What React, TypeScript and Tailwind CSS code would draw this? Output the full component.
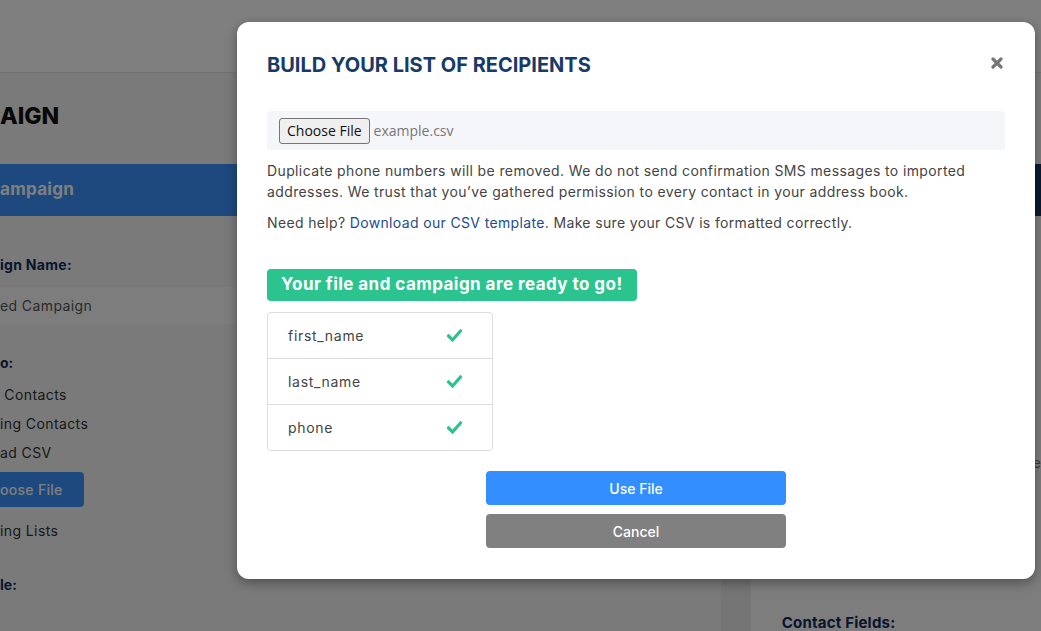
import React from "react";

// Check mark used in the field list
function Check() {
  return (
    <svg width="15" height="13" viewBox="0 0 15 13" fill="none">
      <path d="M1.5 7 L5.5 11 L13.5 2" stroke="#2bc48f" strokeWidth="3.2" strokeLinecap="square" />
    </svg>
  );
}

const fields = ["first_name", "last_name", "phone"];

export default function App() {
  return (
    <div
      className="relative h-[631px] w-[1041px] overflow-hidden bg-[#f1f1f1] text-[#333]"
      style={{ fontFamily: "Inter, 'Noto Sans', sans-serif" }}
    >
      {/* page header */}
      <div className="h-[73px] border-b border-[#e4e4e4] bg-white" />

      <div className="flex">
        {/* left column: campaign form */}
        <div className="w-[723px] bg-[#f5f5f5]">
          <div className="pt-[27px] text-[23px] font-extrabold leading-[33px] text-[#111]">AIGN</div>
          <div className="mt-[31px] flex h-[52px] items-center bg-[#3a93ff] text-[17px] font-bold tracking-[0.3px] text-white">
            ampaign
          </div>
          <div className="mt-[38px] text-[14px] font-bold tracking-[0.3px] text-[#0f2d5a]">ign Name:</div>
          <div className="mt-[12px] flex h-[37px] items-center bg-[#fbfbfc] text-[14px] tracking-[0.4px] text-[#555]">
            ed Campaign
          </div>
          <div className="mt-[28px] text-[14px] font-bold text-[#0f2d5a]">o:</div>
          <div className="mt-[11px] flex flex-col gap-[8px] text-[14px] leading-[21px] tracking-[0.4px]">
            <span>&nbsp;Contacts</span>
            <span>ing Contacts</span>
            <span>ad CSV</span>
          </div>
          <div className="mt-[9px] flex h-[35px] w-[84px] items-center rounded-r-[4px] bg-[#3a93ff] text-[14px] font-medium tracking-[0.3px] text-white">
            oose File
          </div>
          <div className="mt-[13px] text-[14px] leading-[21px] tracking-[0.4px]">ing Lists</div>
          <div className="mt-[33px] text-[14px] font-bold text-[#0f2d5a]">le:</div>
        </div>

        {/* gap between columns */}
        <div className="w-[30px] bg-[#ebebeb]" />

        {/* right column: preview panel */}
        <div className="flex-1 bg-[#fbfbfb]">
          <div className="mt-[91px] h-[52px] bg-[#16345e]" />
          <div className="mt-[236px] pl-[282px] text-[14px] text-[#777]">e</div>
          <div className="mt-[140px] pl-[31px] text-[15px] font-bold leading-[20px] tracking-[0.2px] text-[#0f2d5a]">
            Contact Fields:
          </div>
        </div>
      </div>

      {/* dimming overlay */}
      <div className="absolute inset-0 bg-black/50" />

      {/* modal */}
      <div className="absolute left-[237px] top-[22px] w-[798px] rounded-[12px] bg-white px-[30px] pt-[30px] pb-[31px] shadow-[0_4px_12px_rgba(0,0,0,0.35)]">
        <div className="flex items-start justify-between">
          <h2 className="text-[20px] font-bold leading-[26px] text-[#173a66]">BUILD YOUR LIST OF RECIPIENTS</h2>
          <svg className="mr-[2px] mt-[5px]" width="12" height="12" viewBox="0 0 12 12">
            <path d="M2 2 L10 10 M10 2 L2 10" stroke="#777" strokeWidth="3.2" strokeLinecap="round" />
          </svg>
        </div>

        {/* file chooser */}
        <div
          className="mt-[33px] flex h-[39px] items-center rounded-[4px] bg-[#f5f6fa] px-[12px] text-[14px]"
          style={{ fontFamily: "'Open Sans', 'Noto Sans', sans-serif" }}
        >
          <button className="h-[26px] rounded-[3px] border border-[#767676] bg-[#efefef] px-[7px] text-[14px] text-[#111]">
            Choose File
          </button>
          <span className="ml-[4px] text-[#777]">example.csv</span>
        </div>

        <p className="mt-[10px] pr-[30px] text-[14px] leading-[21px] tracking-[0.38px] text-[#444]">
          Duplicate phone numbers will be removed. We do not send confirmation SMS messages to imported addresses. We
          trust that you’ve gathered permission to every contact in your address book.
        </p>
        <p className="mt-[10px] text-[14px] leading-[21px] tracking-[0.35px] text-[#444]">
          Need help? <span className="text-[#1d4b8c]">Download our CSV template</span>. Make sure your CSV is formatted
          correctly.
        </p>

        {/* ready badge */}
        <div className="mt-[36px] inline-flex h-[32px] items-center rounded-[4px] bg-[#2bc48f] px-[14px] text-[17px] font-bold tracking-[0.45px] text-white">
          Your file and campaign are ready to go!
        </div>

        {/* mapped fields */}
        <div className="mt-[11px] w-[226px] rounded-[4px] border border-[#dcdcdc]">
          {fields.map((f, i) => (
            <div
              key={f}
              className={`flex items-center justify-between pl-[20px] pr-[30px] text-[14px] tracking-[0.7px] text-[#444] ${
                i > 0 ? "h-[46px] border-t border-[#dcdcdc]" : "h-[45px]"
              }`}
            >
              <span>{f}</span>
              <Check />
            </div>
          ))}
        </div>

        {/* actions */}
        <div className="mt-[20px] flex flex-col items-center gap-[9px]">
          <button className="h-[34px] w-[300px] rounded-[4px] bg-[#338eff] text-[14px] font-medium text-white">
            Use File
          </button>
          <button className="h-[34px] w-[300px] rounded-[4px] bg-[#808080] text-[14px] font-medium text-white">
            Cancel
          </button>
        </div>
      </div>
    </div>
  );
}
